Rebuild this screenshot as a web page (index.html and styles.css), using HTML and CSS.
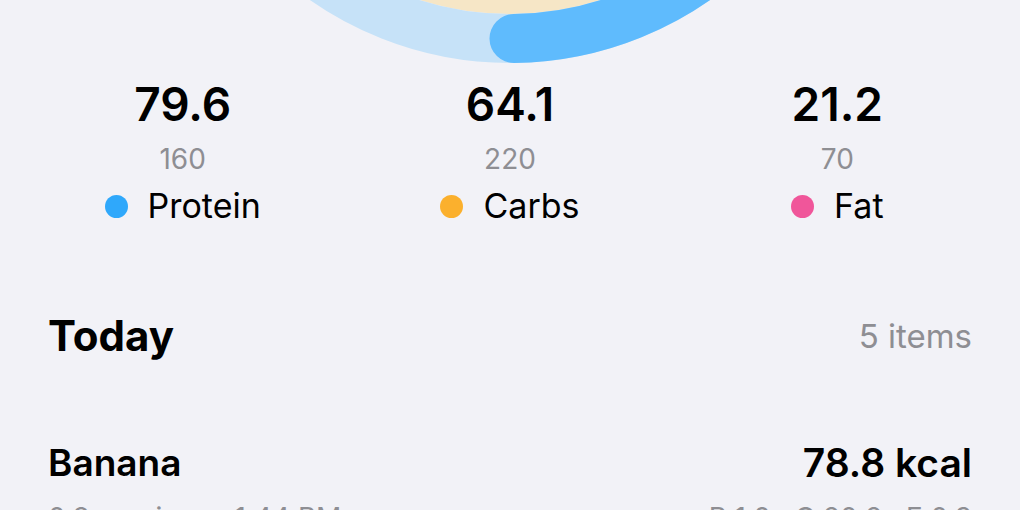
FILE: index.html
```html
<!DOCTYPE html>
<html lang="en">
<head>
    <title>Nutrition - Today</title>
    <link rel="stylesheet" href="styles.css">
</head>
<body>

<!-- Calorie ring (only the bottom of it is on screen) -->
<svg class="ring" width="1020" height="70" viewBox="0 0 1020 70">
    <circle cx="510" cy="-286" r="300" fill="#f6e6c6"/>
    <circle cx="510" cy="-286" r="324.5" fill="none" stroke="#c6e2f8" stroke-width="49"/>
    <path d="M 514 38.5 A 324.5 324.5 0 0 0 834.5 -286" fill="none" stroke="#5fbbfd" stroke-width="49" stroke-linecap="round"/>
</svg>

<div class="macros">
    <div class="macro">
        <div class="macro-value">79.6</div>
        <div class="macro-goal">160</div>
        <div class="macro-label"><span class="dot protein"></span>Protein</div>
    </div>
    <div class="macro">
        <div class="macro-value">64.1</div>
        <div class="macro-goal">220</div>
        <div class="macro-label"><span class="dot carbs"></span>Carbs</div>
    </div>
    <div class="macro">
        <div class="macro-value">21.2</div>
        <div class="macro-goal">70</div>
        <div class="macro-label"><span class="dot fat"></span>Fat</div>
    </div>
</div>

<div class="section-head">
    <h2>Today</h2>
    <span class="count">5 items</span>
</div>

<div class="entry">
    <div class="entry-row">
        <span class="entry-name">Banana</span>
        <span class="entry-kcal">78.8 kcal</span>
    </div>
    <div class="entry-row entry-meta">
        <span>0.8 servings · 1:44 PM</span>
        <span>P 1.0 · C 20.2 · F 0.3</span>
    </div>
</div>

</body>
</html>
```

FILE: styles.css
```css
body {
    margin: 0;
    background-color: #f2f2f7;
    font-family: Inter, "Noto Sans", sans-serif;
    color: #000;
    overflow: hidden;
}
.ring {
    display: block;
}
.macros {
    display: grid;
    grid-template-columns: repeat(3, 1fr);
    padding: 0 19px;
    margin-top: 11px;
}
.macro {
    display: flex;
    flex-direction: column;
    align-items: center;
}
.macro-value {
    font-size: 46px;
    line-height: 46px;
    font-weight: 600;
}
.macro-goal {
    font-size: 28px;
    line-height: 34px;
    color: #8e8e93;
    margin-top: 15px;
}
.macro-label {
    display: flex;
    align-items: center;
    font-size: 34px;
    line-height: 40px;
    margin-top: 10px;
}
.dot {
    width: 23px;
    height: 23px;
    border-radius: 50%;
    margin-right: 20px;
}
.dot.protein {
    background-color: #2fa8fb;
}
.dot.carbs {
    background-color: #fbb02d;
}
.dot.fat {
    background-color: #f0569a;
}
.section-head {
    display: flex;
    justify-content: space-between;
    align-items: center;
    padding: 0 48px;
    margin-top: 84px;
}
.section-head h2 {
    margin: 0;
    font-size: 42px;
    line-height: 52px;
    font-weight: 700;
}
.count {
    font-size: 33px;
    color: #8e8e93;
}
.entry {
    padding: 0 48px;
    margin-top: 77px;
}
.entry-row {
    display: flex;
    justify-content: space-between;
    align-items: center;
    line-height: 48px;
}
.entry-name {
    font-size: 37px;
    font-weight: 600;
}
.entry-kcal {
    font-size: 39px;
    font-weight: 600;
}
.entry-meta {
    font-size: 28px;
    line-height: 40px;
    color: #8e8e93;
    margin-top: 11px;
}
```
